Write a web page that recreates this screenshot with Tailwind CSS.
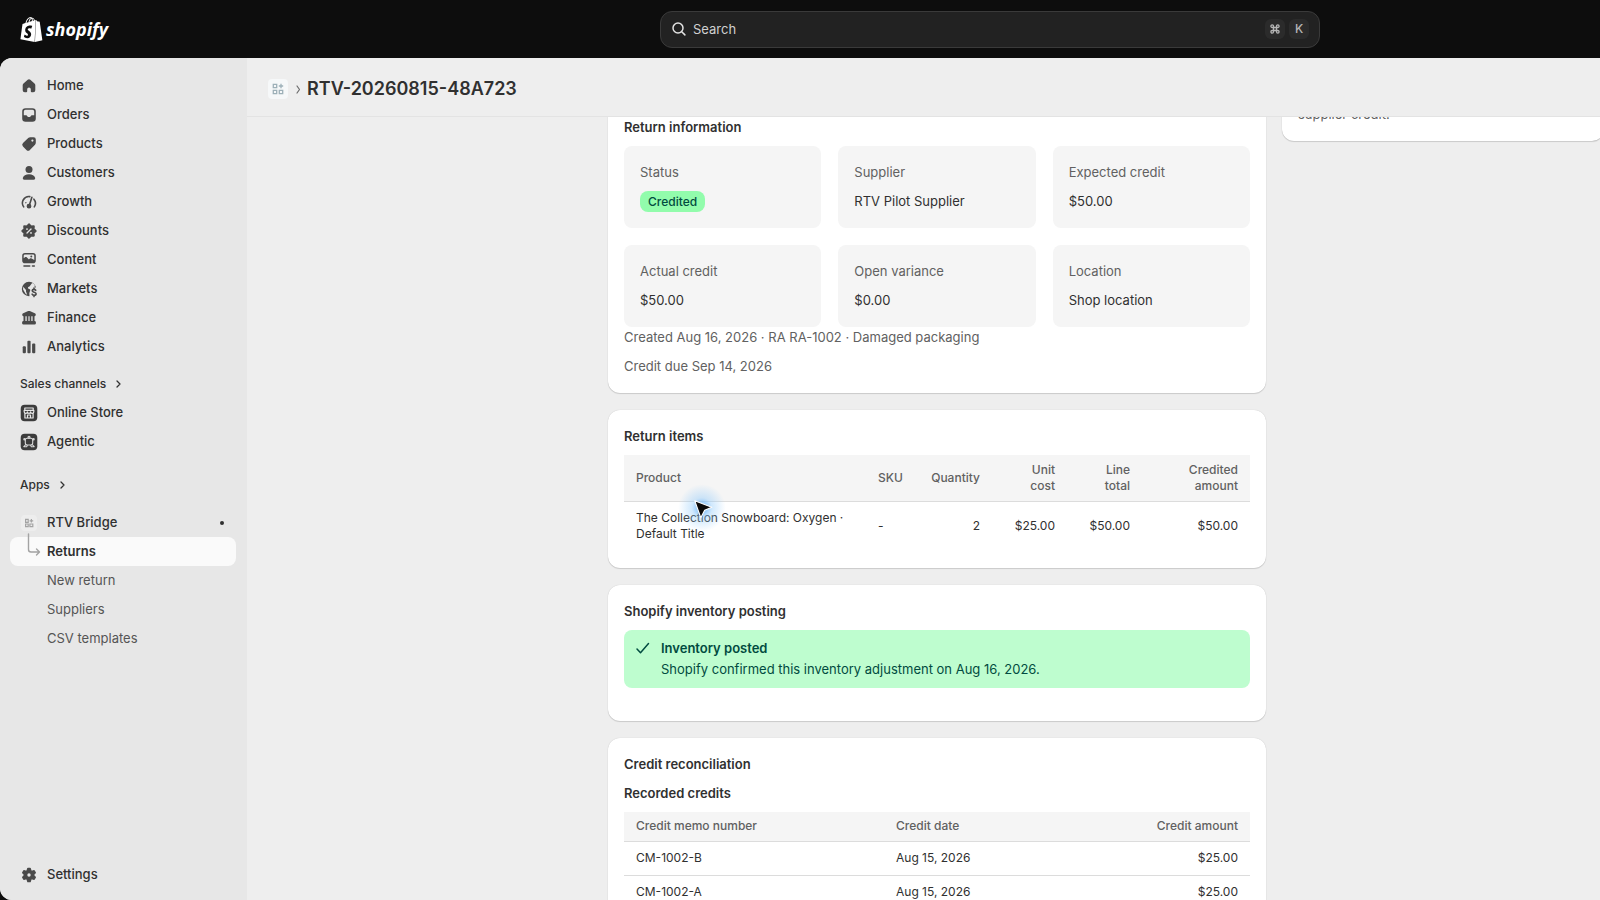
<!DOCTYPE html>
<html lang="en">

<head>
    <meta charset="UTF-8">
    <meta name="viewport" content="width=device-width, initial-scale=1.0">
    <title>RTV-20260815-48A723 · RTV Bridge</title>

    <!-- Tailwind CSS -->
    <script src="https://cdn.jsdelivr.net/npm/@tailwindcss/browser@4"></script>
</head>

<body class="flex h-screen flex-col overflow-hidden bg-[#0d0d0d] font-['Inter',sans-serif] text-[13px] leading-[21px] text-[#303030]">

    <!-- Top Bar -->
    <header class="flex h-[58px] shrink-0 items-center px-5">
        <a href="#" class="flex w-[640px] shrink-0 items-center gap-[2px] text-white" aria-label="Shopify home">
            <svg class="size-[25px] -ml-px" viewBox="0 0 24 24" fill="currentColor"><path d="M15.337 23.979l7.216-1.561s-2.604-17.613-2.625-17.73c-.018-.116-.114-.192-.211-.192s-1.929-.136-1.929-.136-1.275-1.274-1.439-1.411c-.045-.037-.075-.057-.121-.074l-.914 21.104h.023zM11.71 11.305s-.81-.424-1.774-.424c-1.447 0-1.504.906-1.504 1.141 0 1.232 3.24 1.715 3.24 4.629 0 2.295-1.44 3.76-3.406 3.76-2.354 0-3.54-1.465-3.54-1.465l.646-2.086s1.245 1.066 2.28 1.066c.675 0 .975-.545.975-.932 0-1.619-2.654-1.694-2.654-4.359-.034-2.237 1.571-4.416 4.827-4.416 1.257 0 1.875.361 1.875.361l-.945 2.715-.02.01zM11.17.83c.136 0 .271.038.405.135-.984.465-2.064 1.639-2.508 3.992-.656.213-1.293.405-1.889.578C7.697 3.75 8.951.84 11.17.84V.83zm1.235 2.949v.135c-.754.232-1.583.484-2.394.736.466-1.777 1.333-2.645 2.085-2.971.193.501.309 1.176.309 2.1zm.539-2.234c.694.074 1.141.867 1.429 1.755-.349.114-.735.231-1.158.366v-.252c0-.752-.096-1.371-.271-1.871v.002zm2.992 1.289c-.02 0-.06.021-.078.021s-.289.075-.714.21c-.423-1.233-1.176-2.37-2.508-2.37h-.115C12.135.209 11.669 0 11.265 0 8.159 0 6.675 3.877 6.21 5.846c-1.194.365-2.063.636-2.16.674-.675.213-.694.232-.772.87-.075.462-1.83 14.063-1.83 14.063L15.009 24l.927-21.166z"/></svg>
            <span class="font-['Open_Sans',sans-serif] text-[18px] font-bold italic">shopify</span>
        </a>
        <label class="flex h-[37px] max-w-[660px] flex-1 items-center gap-1 rounded-xl border border-[#3a3a3a] bg-[#222] pr-[10px] pl-2 text-[#e3e3e3]">
            <svg class="size-5 shrink-0" viewBox="0 0 20 20" fill="none" stroke="currentColor" stroke-width="1.5" stroke-linecap="round"><circle cx="9" cy="9" r="5"/><path d="M12.700 12.700l3.200 3.200"/></svg>
            <input type="text" placeholder="Search" aria-label="Search" class="min-w-0 flex-1 bg-transparent placeholder:text-[#d0d0d0] outline-none">
            <kbd class="flex size-5 items-center justify-center rounded-md bg-[#2b2b2b] text-[#b5b5b5]">
                <svg class="size-[10px]" viewBox="0 0 10 10" fill="none" stroke="currentColor" stroke-width="1.3"><path d="M3.5 3.5h3v3h-3zM3.5 3.5H2.2A1.3 1.3 0 1 1 3.500 2.200zM6.500 3.500V2.200A1.300 1.300 0 1 1 7.800 3.500zM6.500 6.500H7.800A1.300 1.300 0 1 1 6.500 7.800zM3.500 6.500V7.800A1.300 1.300 0 1 1 2.200 6.500z"/></svg>
            </kbd>
            <kbd class="flex size-5 items-center justify-center rounded-md bg-[#2b2b2b] font-['Inter',sans-serif] text-xs font-medium text-[#b5b5b5]">K</kbd>
        </label>
    </header>

    <div class="flex min-h-0 flex-1 overflow-hidden rounded-l-xl bg-[#eee]">

        <!-- Sidebar -->
        <nav class="flex w-[247px] shrink-0 flex-col bg-[#e7e7e7] pt-[13px] pb-[11px] font-medium" aria-label="Main">
            <a href="#" class="flex h-[29px] items-center gap-2 pl-[19px]">
                <svg class="size-5 text-[#4a4a4a]" viewBox="0 0 20 20" fill="currentColor"><path d="M8.700 3.800a2 2 0 0 1 2.600 0l4.200 3.700c.500.450.800 1.100.800 1.800v4.900a2.100 2.100 0 0 1-2.100 2.100h-1.400a1 1 0 0 1-1-1v-2a1.800 1.800 0 0 0-3.600 0v2a1 1 0 0 1-1 1H5.800a2.100 2.100 0 0 1-2.100-2.100V9.300c0-.7.300-1.350.8-1.800z"/></svg>
                Home
            </a>
            <a href="#" class="flex h-[29px] items-center gap-2 pl-[19px]">
                <svg class="size-5 text-[#4a4a4a]" viewBox="0 0 20 20" fill="currentColor" fill-rule="evenodd"><path d="M6.500 3.200h7a3.300 3.300 0 0 1 3.300 3.300v7a3.300 3.300 0 0 1-3.300 3.300h-7a3.300 3.300 0 0 1-3.300-3.300v-7a3.300 3.300 0 0 1 3.300-3.300zM6.600 4.700A1.800 1.800 0 0 0 4.800 6.500V10.200h2.400c.400 0 .700.200.850.550l.400.800c.150.300.450.500.800.500h1.500c.350 0 .650-.200.800-.500l.400-.800c.150-.350.450-.550.850-.550H15.200V6.500A1.800 1.800 0 0 0 13.400 4.700z"/></svg>
                Orders
            </a>
            <a href="#" class="flex h-[29px] items-center gap-2 pl-[19px]">
                <svg class="size-5 text-[#4a4a4a]" viewBox="0 0 20 20" fill="currentColor" fill-rule="evenodd"><path d="M11.300 3.200h3.300a2.200 2.200 0 0 1 2.200 2.200v3.400c0 .8-.3 1.500-.8 2l-5.100 5.200a2.500 2.500 0 0 1-3.500 0l-3.400-3.400a2.500 2.500 0 0 1 0-3.500l5.200-5.100c.5-.5 1.300-.8 2.100-.8zm2.100 4.500a1.100 1.100 0 1 0 0-2.200 1.100 1.100 0 0 0 0 2.200z"/></svg>
                Products
            </a>
            <a href="#" class="flex h-[29px] items-center gap-2 pl-[19px]">
                <svg class="size-5 text-[#4a4a4a]" viewBox="0 0 20 20" fill="currentColor"><circle cx="10" cy="6.500" r="3.500"/><path d="M10 11.300c3.200 0 5.400 1.500 6.100 3.500.400 1-.4 2-1.400 2H5.300c-1 0-1.800-1-1.400-2 .7-2 2.900-3.500 6.100-3.500z"/></svg>
                Customers
            </a>
            <a href="#" class="flex h-[29px] items-center gap-2 pl-[19px]">
                <svg class="size-5 text-[#4a4a4a]" viewBox="0 0 20 20" fill="none" stroke="currentColor" stroke-width="1.600" stroke-linecap="round"><path d="M4.700 14.900A6.500 6.500 0 0 1 10.800 4.600M14.900 7.200a6.500 6.500 0 0 1 .4 7.700"/><path d="M12.900 5.300l-2.500 7.600"/><path d="M6.800 10.800l.1-.2" stroke-width="1.200"/><circle cx="10" cy="14.200" r="1.600" fill="currentColor"/></svg>
                Growth
            </a>
            <a href="#" class="flex h-[29px] items-center gap-2 pl-[19px]">
                <svg class="size-5" viewBox="0 0 20 20"><path fill="#4a4a4a" stroke="#4a4a4a" stroke-width="2.200" stroke-linejoin="round" d="M10 3.400l1.900 2.100 2.800-.2-.2 2.800L16.600 10l-2.100 1.900.2 2.800-2.800-.2L10 16.600l-1.900-2.100-2.800.2.200-2.800L3.400 10l2.100-1.900-.2-2.800 2.800.2z"/><path d="M12 8l-4 4" stroke="#e7e7e7" stroke-width="1.300" stroke-linecap="round"/><circle cx="8" cy="8.100" r=".9" fill="#e7e7e7"/><circle cx="12" cy="11.900" r=".9" fill="#e7e7e7"/></svg>
                Discounts
            </a>
            <a href="#" class="flex h-[29px] items-center gap-2 pl-[19px]">
                <svg class="size-5 text-[#4a4a4a]" viewBox="0 0 20 20" fill="currentColor" fill-rule="evenodd"><path d="M6 3h8a2.800 2.800 0 0 1 2.800 2.800v4.600A2.800 2.800 0 0 1 14 13.200H6a2.800 2.800 0 0 1-2.800-2.800V5.800A2.800 2.800 0 0 1 6 3zM6 4.500c-.7 0-1.300.6-1.300 1.300v2.500l1.300-1c.5-.4 1.200-.4 1.700 0l2.200 2.200 1-.9c.5-.4 1.200-.4 1.700 0l2.700 1.500V5.800c0-.7-.6-1.300-1.300-1.300zM12.300 7.600a1 1 0 1 0 0-2 1 1 0 0 0 0 2z"/><rect x="4.200" y="15.200" width="7.300" height="1.600" rx=".8"/><rect x="12.700" y="15.200" width="3.400" height="1.600" rx=".8"/></svg>
                Content
            </a>
            <a href="#" class="flex h-[29px] items-center gap-2 pl-[19px]">
                <svg class="size-5" viewBox="0 0 20 20"><circle cx="10" cy="10" r="7.200" fill="#4a4a4a"/><path fill="#e7e7e7" d="M12.700 4.600L10.900 7c-.5.700-1.600.7-1.900 1.500-.2.700.4 1.400 1.200 1.500.9.100 1.200.7 1 1.500l-.8 2.200c-.2.600.1 1.300.1 4H18V9l-2.500-.8.3-2.200-2-2zM4.200 7.800l2.600 3c.5.500.2 1 .2 1.700l1.200 3.200-1.500-.6-2.600-4.600z"/><path d="M16.700 11.300c-.5-.7-1.100-.9-1.700-.9-1 0-1.800.5-1.800 1.400 0 2 3.900.9 3.900 3 0 .9-.8 1.500-2 1.500-.9 0-1.600-.4-2-1.100M15 9v1.300M15 16.400v1.200" fill="none" stroke="#4a4a4a" stroke-width="1.600" stroke-linecap="round"/></svg>
                Markets
            </a>
            <a href="#" class="flex h-[29px] items-center gap-2 pl-[19px]">
                <svg class="size-5 text-[#4a4a4a]" viewBox="0 0 20 20" fill="currentColor"><path d="M9.200 3.100a1.900 1.900 0 0 1 1.600 0l5 2.200c.6.300 1 .8 1 1.500s-.6 1.400-1.300 1.400h-11c-.7 0-1.300-.7-1.300-1.400s.4-1.200 1-1.500z"/><path d="M4.500 7.500h1.900v6H4.500zM7.700 7.500h1.700v6H7.700zM10.600 7.500h1.700v6h-1.700zM13.600 7.500h1.900v6h-1.900z"/><rect x="3.200" y="13" width="13.600" height="3.500" rx="1.200"/></svg>
                Finance
            </a>
            <a href="#" class="flex h-[29px] items-center gap-2 pl-[19px]">
                <svg class="size-5 text-[#4a4a4a]" viewBox="0 0 20 20" fill="currentColor"><rect x="3.700" y="9.300" width="3.200" height="7" rx="1"/><rect x="8.400" y="3.700" width="3.200" height="12.600" rx="1"/><rect x="13.100" y="6.600" width="3.200" height="9.700" rx="1"/></svg>
                Analytics
            </a>

            <button type="button" class="mt-2 flex h-[29px] items-center gap-[6px] pl-5 text-xs">
                Sales channels
                <svg class="size-3" viewBox="0 0 12 12" fill="none" stroke="currentColor" stroke-width="1.300" stroke-linecap="round" stroke-linejoin="round"><path d="M5 3l3 3-3 3"/></svg>
            </button>
            <a href="#" class="flex h-[29px] items-center gap-2 pl-[19px]">
                <svg class="size-5" viewBox="0 0 20 20" fill="none" stroke="#e7e7e7" stroke-width="1.200" stroke-linejoin="round"><rect x="1.700" y="1.700" width="16.600" height="16.600" rx="4" fill="#3c3c3c" stroke="none"/><path d="M5.800 5h8.400v2.300H5.800zM5.200 7.300h9.600v1.500a1.600 1.600 0 0 1-3.200 0 1.600 1.600 0 0 1-3.200 0 1.600 1.600 0 0 1-3.200 0zM5.900 10.500V15h8.200v-4.500M8.500 15v-3h3v3"/></svg>
                Online Store
            </a>
            <a href="#" class="flex h-[29px] items-center gap-2 pl-[19px]">
                <svg class="size-5" viewBox="0 0 20 20" fill="none" stroke="#d8d8d8" stroke-width="1.100" stroke-linejoin="round"><rect x="1.700" y="1.700" width="16.600" height="16.600" rx="4" fill="#3c3c3c" stroke="none"/><rect x="6.300" y="6.300" width="7.400" height="6.700" rx="2"/><path d="M6.800 12.500l-2 2.200h2.800l1-1.500M13.200 12.500l2 2.200h-2.800l-1-1.500"/><circle cx="10" cy="5.200" r="1"/><circle cx="5.500" cy="7.200" r=".7"/><circle cx="14.500" cy="7.200" r=".7"/></svg>
                Agentic
            </a>

            <button type="button" class="mt-[14px] flex h-[29px] items-center gap-[6px] pl-5 text-xs">
                Apps
                <svg class="size-3" viewBox="0 0 12 12" fill="none" stroke="currentColor" stroke-width="1.300" stroke-linecap="round" stroke-linejoin="round"><path d="M5 3l3 3-3 3"/></svg>
            </button>
            <a href="#" class="mt-[9px] flex h-[29px] items-center gap-2 pr-[23px] pl-[19px]">
                <svg class="size-5" viewBox="0 0 20 20" fill="none" stroke="#a3a3a3" stroke-width="1.200"><rect x="2" y="2" width="16" height="16" rx="4" fill="#ededed" stroke="none"/><path d="M6.600 6.300h2.600v3H6.600zM6.600 11h2.600v2.700H6.600zM10.900 11h2.900v2.700h-2.900zM12.400 6v3.600M10.600 7.800h3.600"/></svg>
                <span class="flex-1">RTV Bridge</span>
                <span class="size-1 rounded-full bg-[#303030]"></span>
            </a>
            <a href="#" aria-current="page" class="relative mr-[11px] ml-[10px] flex h-[29px] items-center rounded-lg bg-[#fafafa] pl-[37px] font-semibold">
                <svg class="absolute -top-1 left-[17px] h-6 w-[14px]" viewBox="0 0 14 24" fill="none" stroke="#a3a3a3" stroke-width="1.400" stroke-linecap="round" stroke-linejoin="round"><path d="M1.500 1v15.500a2.500 2.500 0 0 0 2.500 2.500h8M9.500 16l3 3-3 3"/></svg>
                Returns
            </a>
            <a href="#" class="flex h-[29px] items-center pl-[47px] font-normal text-[#555]">New return</a>
            <a href="#" class="flex h-[29px] items-center pl-[47px] font-normal text-[#555]">Suppliers</a>
            <a href="#" class="flex h-[29px] items-center pl-[47px] font-normal text-[#555]">CSV templates</a>

            <a href="#" class="mt-auto flex h-[29px] items-center gap-2 pl-[19px]">
                <svg class="size-5" viewBox="0 0 20 20"><path fill="#4a4a4a" stroke="#4a4a4a" stroke-width="1.500" stroke-linejoin="round" d="M8.900 3.500h2.200l.7 2.300 1 .6 2.300-.6 1.100 1.900L14.600 9.400v1.200l1.600 1.700-1.100 1.900-2.300-.6-1 .6-.7 2.300H8.900l-.7-2.300-1-.6-2.300.6-1.100-1.900 1.600-1.700V9.400L3.800 7.700l1.100-1.900 2.300.6 1-.6z"/><circle cx="10" cy="10" r="1.700" fill="#e7e7e7"/></svg>
                Settings
            </a>
        </nav>

        <main class="flex min-w-0 flex-1 flex-col overflow-hidden">

            <!-- Page Header -->
            <div class="z-10 flex h-[59px] shrink-0 items-center border-b border-[#e3e3e3] bg-[#eee] pt-1 pl-[21px]">
                <svg class="size-5" viewBox="0 0 20 20" fill="none" stroke="#9db0b8" stroke-width="1.300"><rect width="20" height="20" rx="4" fill="#f6f8f9" stroke="none"/><path d="M5.300 5.300h3.400v3.400H5.300zM5.300 11.300h3.400v3.400H5.300zM11.300 11.300h3.400v3.400h-3.400zM13 4.800v4.400M10.800 7h4.400"/></svg>
                <svg class="mr-[3px] ml-1 size-3" viewBox="0 0 12 12" fill="none" stroke="#6b6b6b" stroke-width="1.200" stroke-linecap="round" stroke-linejoin="round"><path d="M5 3l2.500 3.500L5 10"/></svg>
                <h1 class="text-lg font-semibold">RTV-20260815-48A723</h1>
            </div>

            <!-- Scrolled Content -->
            <div class="-mt-4 -mr-1 ml-auto flex w-full max-w-[996px] items-start gap-4">
                <div class="flex min-w-0 flex-1 flex-col gap-[17px]">

                    <!-- Return information -->
                    <section class="rounded-b-xl bg-white p-4 shadow-[0_1px_1px_#0002,0_0_1px_#0003]">
                        <h2 class="font-semibold">Return information</h2>
                        <dl class="mt-2 grid grid-cols-3 gap-[17px]">
                            <div class="rounded-lg bg-[#f5f5f5] p-4">
                                <dt class="text-[#616161]">Status</dt>
                                <dd class="mt-2"><span class="block w-fit rounded-lg bg-[#92fcac] px-2 text-xs leading-[21px] font-medium text-[#014b40]">Credited</span></dd>
                            </div>
                            <div class="rounded-lg bg-[#f5f5f5] p-4">
                                <dt class="text-[#616161]">Supplier</dt>
                                <dd class="mt-2">RTV Pilot Supplier</dd>
                            </div>
                            <div class="rounded-lg bg-[#f5f5f5] p-4">
                                <dt class="text-[#616161]">Expected credit</dt>
                                <dd class="mt-2">$50.00</dd>
                            </div>
                            <div class="rounded-lg bg-[#f5f5f5] p-4">
                                <dt class="text-[#616161]">Actual credit</dt>
                                <dd class="mt-2">$50.00</dd>
                            </div>
                            <div class="rounded-lg bg-[#f5f5f5] p-4">
                                <dt class="text-[#616161]">Open variance</dt>
                                <dd class="mt-2">$0.00</dd>
                            </div>
                            <div class="rounded-lg bg-[#f5f5f5] p-4">
                                <dt class="text-[#616161]">Location</dt>
                                <dd class="mt-2">Shop location</dd>
                            </div>
                        </dl>
                        <p class="text-[#616161]">Created Aug 16, 2026 · RA RA-1002 · Damaged packaging</p>
                        <p class="mt-2 text-[#616161]">Credit due Sep 14, 2026</p>
                    </section>

                    <!-- Return items -->
                    <section class="rounded-xl bg-white px-4 pt-4 pb-[17px] shadow-[0_1px_1px_#0002,0_0_1px_#0003]">
                        <h2 class="font-semibold">Return items</h2>
                        <table class="mt-2 w-full table-fixed text-xs">
                            <thead>
                                <tr class="h-[46px] border-b border-[#dcdcdc] bg-[#f5f5f5] text-[#616161]">
                                    <th class="px-3 text-left font-medium">Product</th>
                                    <th class="w-[50px] pl-3 text-left font-medium">SKU</th>
                                    <th class="w-[76px] px-3 text-right font-medium">Quantity</th>
                                    <th class="w-[75px] px-3 text-right leading-4 font-medium">Unit<br>cost</th>
                                    <th class="w-[75px] px-3 text-right leading-4 font-medium">Line<br>total</th>
                                    <th class="w-[108px] px-3 text-right leading-4 font-medium">Credited<br>amount</th>
                                </tr>
                            </thead>
                            <tbody>
                                <tr class="h-[50px]">
                                    <td class="px-3 leading-4">The Collection Snowboard: Oxygen · Default Title</td>
                                    <td class="pl-3">-</td>
                                    <td class="px-3 text-right">2</td>
                                    <td class="px-3 text-right">$25.00</td>
                                    <td class="px-3 text-right">$50.00</td>
                                    <td class="px-3 text-right">$50.00</td>
                                </tr>
                            </tbody>
                        </table>
                    </section>

                    <!-- Inventory posting -->
                    <section class="rounded-xl bg-white px-4 pt-4 pb-[33px] shadow-[0_1px_1px_#0002,0_0_1px_#0003]">
                        <h2 class="font-semibold">Shopify inventory posting</h2>
                        <div role="status" class="mt-2 flex gap-2 rounded-lg bg-[#befdcf] px-[9px] py-2 text-[#014b40]">
                            <svg class="size-5 shrink-0" viewBox="0 0 20 20" fill="none" stroke="currentColor" stroke-width="1.500" stroke-linecap="round" stroke-linejoin="round"><path d="M4 11l3.500 3.700L15.500 5.500"/></svg>
                            <div>
                                <p class="font-semibold">Inventory posted</p>
                                <p>Shopify confirmed this inventory adjustment on Aug 16, 2026.</p>
                            </div>
                        </div>
                    </section>

                    <!-- Credit reconciliation -->
                    <section class="rounded-xl bg-white p-4 shadow-[0_1px_1px_#0002,0_0_1px_#0003]">
                        <h2 class="font-semibold">Credit reconciliation</h2>
                        <h3 class="mt-2 font-semibold">Recorded credits</h3>
                        <table class="mt-2 w-full table-fixed text-xs">
                            <thead>
                                <tr class="h-[29px] border-b border-[#dcdcdc] bg-[#f5f5f5] text-[#616161]">
                                    <th class="w-[260px] px-3 text-left font-medium">Credit memo number</th>
                                    <th class="px-3 text-left font-medium">Credit date</th>
                                    <th class="px-3 text-right font-medium">Credit amount</th>
                                </tr>
                            </thead>
                            <tbody>
                                <tr class="h-[34px] border-b border-[#dcdcdc]">
                                    <td class="px-3">CM-1002-B</td>
                                    <td class="px-3">Aug 15, 2026</td>
                                    <td class="px-3 text-right">$25.00</td>
                                </tr>
                                <tr class="h-[34px]">
                                    <td class="px-3">CM-1002-A</td>
                                    <td class="px-3">Aug 15, 2026</td>
                                    <td class="px-3 text-right">$25.00</td>
                                </tr>
                            </tbody>
                        </table>
                    </section>
                </div>

                <aside class="w-[322px] shrink-0 rounded-b-xl bg-white px-4 pt-[3px] pb-4 text-[#616161] shadow-[0_1px_1px_#0002,0_0_1px_#0003]">
                    <p>supplier credit.</p>
                </aside>
            </div>
        </main>
    </div>

    <!-- Mouse Pointer -->
    <div class="pointer-events-none absolute top-[484px] left-[678px] z-20 size-12 rounded-full bg-radial from-[#3f9ff5]/80 via-[#8cc8fa]/40 via-30% to-transparent to-70%">
        <svg class="absolute top-[14px] left-[15px] h-[22px] w-5" viewBox="0 0 18 20" fill="#0a0a0a" stroke="#fff" stroke-width="1" stroke-linejoin="round"><path d="M1.500 2.500l15.500 6-6.500 2.700-3.500 6.800z"/></svg>
    </div>

</body>

</html>
